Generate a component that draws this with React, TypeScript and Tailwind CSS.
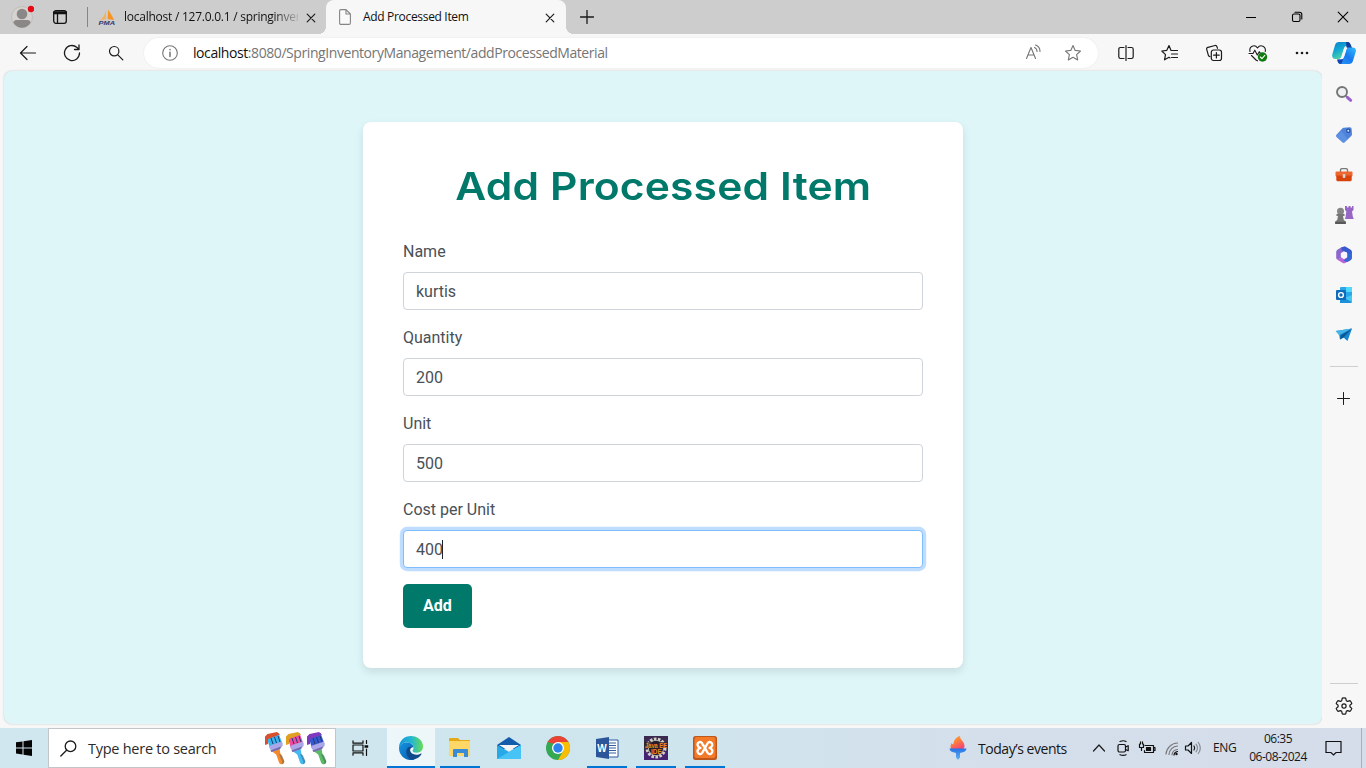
import React from "react";

type SvgProps = { w?: number; h?: number; box?: string; className?: string; sw?: number; stroke?: string; children: React.ReactNode };

function Glyph({ w = 20, h = 20, box, className = "", sw = 1.2, stroke = "#1b1b1b", children }: SvgProps) {
  return (
    <svg width={w} height={h} viewBox={box ?? `0 0 ${w} ${h}`} fill="none" stroke={stroke} strokeWidth={sw} strokeLinecap="round" strokeLinejoin="round" className={`block shrink-0 ${className}`}>
      {children}
    </svg>
  );
}

function CloseGlyph() {
  return <Glyph w={10} h={10} sw={1.2}><path d="M1.200 1.200l7.600 7.600M8.800 1.200L1.200 8.800" /></Glyph>;
}

function TabBar() {
  return (
    <div className="flex h-[34px] bg-[#cdcdcd]">
      <div className="flex w-11 items-center justify-center">
        <Glyph w={24} h={24} stroke="none">
          <circle cx="12" cy="12" r="10.5" fill="#d6d2cf" stroke="#c2beba" strokeWidth="1" />
          <circle cx="12" cy="9" r="5.3" fill="#8a8886" />
          <path d="M3.5 18c0-2.2 1.2-3 3-3h11c1.800 0 3 .8 3 3-2 3.200-5 4.800-8.500 4.800S5.500 21.200 3.500 18z" fill="#8a8886" />
          <circle cx="21" cy="4" r="3.2" fill="#e60b17" />
        </Glyph>
      </div>
      <div className="flex w-8 items-center justify-center">
        <Glyph w={16} h={16} stroke="#111" sw={1.3}>
          <rect x="1.700" y="1.700" width="12.600" height="12.600" rx="2.200" />
          <path d="M2 3.200h12M2 4.300h12" strokeWidth="2" />
          <path d="M5.500 5v9" />
        </Glyph>
      </div>
      <div className="flex w-3 items-center justify-end"><div className="h-5 w-px bg-[#858585]" /></div>
      <div className="flex w-[238px] items-center rounded-br-[8px] pl-2.5">
        <div className="w-[18px] shrink-0">
          <svg width="18" height="17" viewBox="0 0 18 17">
            <path d="M8 0.500C7.500 5 5 9 1.500 11.500L8 10z" fill="#f4b25d" />
            <path d="M10 0.500c2 3 4.500 7 6 10.500L9.500 10c.5-3 .7-6 .5-9.500z" fill="#f7931e" />
            <text x="0.500" y="15.500" textLength="16.500" lengthAdjust="spacingAndGlyphs" className="font-['Liberation_Sans']" fontSize="6" fontWeight="700" fontStyle="italic" fill="#34376e">PMA</text>
          </svg>
        </div>
        <div className="ml-2 w-[174px] shrink-0 overflow-hidden bg-[linear-gradient(90deg,#111_86%,transparent_102%)] bg-clip-text text-[12px] tracking-[-0.250px] whitespace-nowrap text-transparent">localhost / 127.0.0.1 / springinventory</div>
        <div className="ml-2 pt-px"><CloseGlyph /></div>
      </div>
      <div className="relative flex w-[240px] items-center rounded-t-[8px] bg-[#f7f7f7] pl-[13px]">
        <div className="absolute bottom-0 -left-2 size-2 bg-[radial-gradient(circle_at_0_0,transparent_8px,#f7f7f7_8px)]" />
        <div className="absolute -right-2 bottom-0 size-2 bg-[radial-gradient(circle_at_100%_0,transparent_8px,#f7f7f7_8px)]" />
        <Glyph w={12} h={16} stroke="#858585" sw={1.100}>
          <path d="M2 .6h5l4.400 4.400v9q0 1.400-1.400 1.400H2Q.6 15.400.6 14V2Q.6.6 2 .6zM7 .8V5h4.200" fill="#fafafa" />
        </Glyph>
        <div className="ml-3 w-[182px] text-[12px] tracking-[-0.320px] whitespace-nowrap text-[#111]">Add Processed Item</div>
        <div className="pt-px"><CloseGlyph /></div>
      </div>
      <div className="flex w-[42px] items-center justify-center"><Glyph w={14} h={14} sw={1.300}><path d="M7 .5v13M.5 7h13" /></Glyph></div>
      <div className="ml-auto flex">
        <div className="flex w-[46px] items-center justify-center"><div className="h-px w-2.5 bg-black" /></div>
        <div className="flex w-[46px] items-center justify-center">
          <Glyph w={12} h={12} sw={1.100} stroke="#000"><rect x="1.500" y="3" width="7.500" height="7.500" rx="1.500" /><path d="M4 1.200h4.500q2.300 0 2.300 2.300V8" /></Glyph>
        </div>
        <div className="flex w-[46px] items-center justify-center"><Glyph w={12} h={12} sw={1.100} stroke="#000"><path d="M1.200 1.200l9.600 9.600M10.800 1.200L1.200 10.800" /></Glyph></div>
      </div>
    </div>
  );
}

const starPath = "M9 1.500l2.200 4.900 5.300.6-3.900 3.600 1.100 5.300L9 13.200l-4.700 2.700 1.100-5.300L1.500 7l5.300-.6z";

function Toolbar() {
  const slot = "flex w-11 items-center justify-center";
  return (
    <div className="flex h-[37px] items-center bg-[#f7f7f7] pl-1.5">
      <div className={slot}><Glyph w={18} h={18}><path d="M16.500 9H1.500M8 2.500L1.500 9l6.500 6.500" /></Glyph></div>
      <div className={slot}><Glyph w={18} h={18} sw={1.300}><path d="M16.500 9A7.500 7.500 0 1 1 13.700 3.200L16 5.200M16 1v4.500h-4.500" /></Glyph></div>
      <div className={slot}><Glyph w={16} h={16} sw={1.200}><circle cx="6.200" cy="6.200" r="4.700" /><path d="M9.800 9.800l5 5" /></Glyph></div>
      <div className="ml-1.5 flex h-[30px] w-[954px] items-center rounded-full bg-white pr-4 pl-[18px] shadow-[0_0_2px_rgba(0,0,0,0.08)]">
        <Glyph w={16} h={16} stroke="#767676" sw={1.100}><circle cx="8" cy="8" r="7.300" /><path d="M8 7.200v4.300M8 4.500v.3" strokeWidth="1.500" /></Glyph>
        <div className="ml-[15px] text-[14px] tracking-[-0.425px] whitespace-nowrap text-[#757575]"><span className="text-[#111]">localhost</span>:8080/SpringInventoryManagement/addProcessedMaterial</div>
        <div className="ml-auto flex items-center gap-[22px]">
          <Glyph w={17} h={17} stroke="#757575" sw={1.100}><path d="M1.500 14.500L6 3.500l4.500 11M3 11h6M9.500 3.500q2.500 1 2.500 4M10.500 1q4.500 1.500 4.500 6.500" /></Glyph>
          <Glyph w={18} h={18} stroke="#757575" sw={1.100}><path d={starPath} /></Glyph>
        </div>
      </div>
      <div className="ml-1.5 flex">
        <div className={slot}><Glyph w={16} h={18}><path d="M6 3.500H2.500q-1.700 0-1.700 1.700v7.600q0 1.700 1.700 1.700H6M10 3.500h3.500q1.700 0 1.700 1.700v7.600q0 1.700-1.700 1.700H10M8 1.500v15" /></Glyph></div>
        <div className={slot}><Glyph w={18} h={18}><path d="M10 6.500L8 1.500 5.800 6.300.8 7l3.700 3.600-1 5.200 4.500-2.500 1 .6M10.500 6.500h6M10.500 10h6M10.500 13.500h6" /></Glyph></div>
        <div className={slot}><Glyph w={18} h={18}><path d="M12.500 4.300l-.6-1.700Q11.500 1.200 10 1.500L3 3.300Q1.300 3.700 1.700 5.300l1.700 6q.4 1.300 1.600 1.300" /><rect x="6.300" y="6" width="10.200" height="10.500" rx="2.200" /><path d="M11.400 8.500v5.500M8.600 11.200h5.600" /></Glyph></div>
        <div className={slot}>
          <Glyph w={20} h={18} sw={1.100}>
            <path d="M2 7.500C.8 2.500 6.500-.3 9.500 4c3-4.300 8.700-1.500 7.800 3.500M3.500 11.500l4.500 4.500 1.500 0.800M1 9.500h4l1.800-3.300L9.300 11l2-3.300 1.300 1.800h2" />
            <circle cx="14.500" cy="13" r="4.700" fill="#107c10" stroke="none" /><path d="M12.300 13l1.600 1.600 2.900-3.200" stroke="#fff" />
          </Glyph>
        </div>
        <div className={slot}><Glyph w={14} h={4} stroke="none"><g fill="#1b1b1b"><circle cx="2" cy="2" r="1.300" /><circle cx="7" cy="2" r="1.300" /><circle cx="12" cy="2" r="1.300" /></g></Glyph></div>
      </div>
      <div className="flex w-10 items-center justify-center"><CopilotLogo /></div>
    </div>
  );
}

function CopilotLogo() {
  return (
    <svg width="24" height="24" viewBox="0 0 24 24">
      <defs>
        <linearGradient id="cpA" x1="0" y1="0" x2="0.500" y2="1"><stop stopColor="#087fc4" /><stop offset=".5" stopColor="#13a8d5" /><stop offset="1" stopColor="#58d99a" /></linearGradient>
        <linearGradient id="cpB" x1="0" y1="1" x2="1" y2="0"><stop stopColor="#2a9df4" /><stop offset=".5" stopColor="#1779f0" /><stop offset="1" stopColor="#31bfff" /></linearGradient>
      </defs>
      <path d="M7 1h8.500c2 0 2.500 1.500 3.200 4h-4c-2 0-2.500 1.500-3 3.200L9.600 15c-.6 2-1.400 3-3.600 3H3.500C.8 18-.4 16 .4 13L3 4.200C3.700 2 5 1 7 1z" fill="url(#cpA)" />
      <path d="M14 1h2c2.300 0 3 4 4.500 6.500l-6-.5z" fill="#123e9c" />
      <path d="M17 23H8.500c-2 0-2.700-1.500-3.300-4.500H9c2 0 2.600-1.300 3.200-3.200l2-6.300c.6-2 1.500-2.500 3.500-2.500h2.800c2.700 0 4 1.500 3.200 4.500L21 19.800c-.7 2.200-2 3.200-4 3.200z" fill="url(#cpB)" />
      <path d="M11.700 8.500c.4-1.300 1-2 2.300-2h2c-1 .3-1.500 1.200-1.800 2.500l-2 6.300c-.5 1.600-1 2.500-2.400 2.700H8c1-.4 1.400-1.500 1.700-2.700z" fill="#f7f7f7" />
      <path d="M5.200 18.500h4c2 0 2.500-1 3-3l-2.300 6.300c-.4 1.200-1.800 1.600-2.800.7-1-.8-1.600-2.500-1.900-4z" fill="#1945b4" />
    </svg>
  );
}

function FormField({ label, value, focused }: { label: string; value: string; focused?: boolean }) {
  return (
    <div className="mb-4">
      <label className="mb-2 block h-6 leading-6">{label}</label>
      <div className={`flex h-[38px] items-center rounded-[4px] border bg-white px-3 leading-6 ${focused ? "border-[#80bdff] shadow-[0_0_0_3.200px_rgba(0,123,255,0.25)]" : "border-[#ced4da]"}`}>
        <span className="pt-[2px]">{value}</span>
        {focused && <span className="-ml-px h-[19px] w-px bg-[#20242a]" />}
      </div>
    </div>
  );
}

function PageContent() {
  return (
    <main className="ml-1 flex h-[653px] w-[1318px] justify-center rounded-[8px] bg-[#def6f8] pt-[51px] shadow-[0_0_2px_rgba(0,0,0,0.22)]">
      <section className="h-[546px] w-[600px] rounded-[8px] bg-white p-10 font-['Roboto',sans-serif] text-[16px] text-[#495057] shadow-[0_4px_8px_rgba(0,0,0,0.1)]">
        <h1 className="mb-[30px] flex h-12 items-center justify-center font-['Inter',sans-serif] text-[38.500px] leading-[48px] font-semibold whitespace-nowrap text-[#00796b]"><span className="block scale-x-[1.105] tracking-[0.150px]">Add Processed Item</span></h1>
        <FormField label="Name" value="kurtis" />
        <FormField label="Quantity" value="200" />
        <FormField label="Unit" value="500" />
        <FormField label="Cost per Unit" value="400" focused />
        <button className="flex h-11 w-[69px] items-center justify-center rounded-[5px] bg-[#00796b] font-bold text-white">Add</button>
      </section>
    </main>
  );
}

function Sidebar() {
  const slot = "flex h-10 items-center justify-center";
  return (
    <aside className="flex h-[657px] w-[43px] flex-col bg-[#f7f7f7] pt-[3px]">
      <div className={slot}>
        <Glyph w={18} h={18}><circle cx="7" cy="7" r="5" stroke="#757575" strokeWidth="1.900" fill="#eef1f4" /><path d="M11 11l1 1" stroke="#777" strokeWidth="2" /><path d="M12.500 12.500l3.200 2.800" stroke="#9b62cf" strokeWidth="3" /></Glyph>
      </div>
      <div className={`${slot} pt-px`}>
        <Glyph w={18} h={18} stroke="none"><path d="M8.500 1.800l6.500-.6q1.500 0 1.600 1.500l.4 5.500q0 1-.8 1.800l-6.500 6.300q-1.200 1-2.300 0L1.500 11q-1-1.200 0-2.200l5.800-6.300q.5-.6 1.200-.7z" fill="#4f83db" /><path d="M1.300 10.500l6.200 5.600q1 .7 2 0l3-3-6-8-5 5z" fill="#659be9" opacity=".6" /><circle cx="13.300" cy="4.700" r="1.600" fill="#d8e8ff" stroke="#244f9e" /></Glyph>
      </div>
      <div className={`${slot} pt-[2px]`}>
        <Glyph w={18} h={16} stroke="none"><path d="M5.500 5V3q0-1.400 1.400-1.400H11q1.500 0 1.500 1.400v2" stroke="#777" strokeWidth="1.400" /><rect x=".5" y="4.500" width="17" height="5" rx="1" fill="#ef6730" /><path d="M1.300 8.500h15.400v4.300q0 1.500-1.500 1.500H2.800q-1.500 0-1.500-1.500z" fill="#d8430c" /><rect x="7.700" y="7" width="2.700" height="4" rx="1" fill="#d6d5d4" /></Glyph>
      </div>
      <div className={`${slot} pt-[2px]`}>
        <Glyph w={20} h={20} stroke="none"><path d="M11 1h2v1.500h1.500V1h2v1.500H18V1h1.500v4L18 6.500l.8 5 1 2.500h-9l.7-1.500.8-6L11 5z" fill="#9767c7" /><circle cx="6.500" cy="6.300" r="3.500" fill="#858585" /><path d="M2.500 9h8v2H9l.8 4 2 1.500V19H1.200v-2.500l2-1.500L4 11H2.500z" fill="#777" /><path d="M1.200 16.800h10.600V19H1.200z" fill="#595959" /></Glyph>
      </div>
      <div className={`${slot} pt-[2px]`}>
        <Glyph w={18} h={18} stroke="none"><path d="M6.500 1.300L10 .5l5.500 3.200q1.300.8 1.300 2.300v2.500L11.500 6 9 5.500 6.500 7v5L2 13.500 1.200 12V6q0-1.500 1.200-2.200z" fill="#8a66cf" /><path d="M10 .5l5.500 3.200q1.300.8 1.300 2.300v6q0 1.500-1.300 2.300L12 16V6.500L6.500 4V1.300z" fill="#345bd0" /><path d="M2 13.500l4.500-1.700L9 13l6.500-3.500 1.300 2.200q0 1.500-1.300 2.300l-5.300 3q-1.200.7-2.400 0z" fill="#ba63d8" /><path d="M12 6.500l4.800 2.300V12l-1 1.800L12 16l-3.500-1.500L12 12z" fill="#3269d4" /><path d="M9 5.500l3.200 1.800v3.600L9 12.800l-3.200-1.900V7.300z" fill="#f8f5ff" /></Glyph>
      </div>
      <div className={`${slot} pt-[2px]`}>
        <svg width="18" height="18" viewBox="0 0 18 18"><rect x="5" y="1" width="12" height="12" rx="1" fill="#28a8e8" /><path d="M11 1h5q1 0 1 1v4h-6z" fill="#50d9ff" /><path d="M5 9l6 3 6-3v6.500q0 1.500-1.500 1.500H5z" fill="#1b91db" /><path d="M17 9v7L9 12z" fill="#45c6f4" /><rect x="1" y="4" width="10" height="10" rx="1" fill="#0f6cbd" /><circle cx="6" cy="9" r="2.400" stroke="#fff" strokeWidth="1.400" fill="none" /></svg>
      </div>
      <div className={`${slot} pt-[2px]`}>
        <svg width="18" height="18" viewBox="0 0 18 18"><path d="M.7 5L17 2.500 12.500 15 8.500 11.500 5 13.500 4.200 9z" fill="#1687cf" /><path d="M.7 5L17 2.500 4.200 9z" fill="#48b5e8" /><path d="M17 2.500L5.800 9.500 5 13.500l3.500-2z" fill="#0b5794" /></svg>
      </div>
      <div className="mr-[7px] ml-2 mt-3 h-px w-7 shrink-0 bg-[#cecece]" />
      <div className="mt-[25px] flex justify-center pr-px"><Glyph w={13} h={13} sw={1}><path d="M6.500 .5v12M.5 6.500h12" /></Glyph></div>
      <div className="mr-[7px] ml-2 mt-auto h-px w-7 shrink-0 bg-[#cecece]" />
      <div className="mt-[13px] mb-[13px] flex justify-center">
        <Glyph w={18} h={18}><circle cx="9" cy="9" r="2.100" /><path d="M7.300 1.200q1.700-.5 3.400 0l.6 2.500 1.200.7 2.500-.8q1.300 1.200 1.800 3l-1.900 1.700v1.400l1.900 1.700q-.5 1.800-1.800 3l-2.500-.8-1.200.7-.6 2.500q-1.700.5-3.400 0l-.6-2.500-1.200-.7-2.500.8q-1.300-1.200-1.800-3l1.900-1.700V8.300L1.200 6.600q.5-1.800 1.800-3l2.500.8 1.200-.7z" /></Glyph>
      </div>
    </aside>
  );
}

function Brush({ paint, bristle, handle }: { paint: string; bristle: string; handle: string }) {
  return (
    <svg width="21" height="34" viewBox="0 0 21 34">
      <path d="M7.500 20l8-3 .7 5 4 8q.5 2-1.500 3t-3.500-1l-3-8.500z" fill={handle} />
      <path d="M18 24l2.200 6q.5 2-1.500 3l-1 .2q1-1 .6-2.500L15 23z" fill="#35405c" opacity=".35" />
      <path d="M3 7L14.500 2l4 11L6 18z" fill={bristle} />
      <path d="M1 14V5.500L3.500 3 13 1l3 2.500L4 8v5z" fill={paint} />
      <path d="M7 7l2 6M10.500 6l2 6M14 5l2 6" stroke="#213a78" />
      <path d="M5 15l13-4.500.8 4L16 18l-8.500 3z" fill="#aaa6e7" />
      <path d="M6.500 19.500l10.500-4-1 2.500-8.500 3z" fill="#7369ae" />
    </svg>
  );
}

function EdgeLogo() {
  return (
    <svg width="26" height="26" viewBox="0 0 26 26">
      <defs>
        <linearGradient id="edA" x1="0" x2="1"><stop stopColor="#1597d8" /><stop offset=".5" stopColor="#22b6d3" /><stop offset="1" stopColor="#67dc55" /></linearGradient>
        <linearGradient id="edB" x1="0" y1="0" x2="1" y2="1"><stop stopColor="#1695e0" /><stop offset="1" stopColor="#0759aa" /></linearGradient>
      </defs>
      <path d="M1 13C1 5.500 6.500 1 13 1s12 4.500 12 10.500c0 4-2.800 6.200-6.200 6.200-3 0-4.200-1-4.200-2 0-.8 1-1.300 1-3C15.600 9 12 7.500 8.500 7.500 4.500 7.500 2 10 1 13z" fill="url(#edA)" />
      <path d="M1 12.500C2 9.500 4.500 7.500 8.500 7.500c4 0 7.100 2 7.100 5.200-1-1-5.800-.5-5.800 4.500 0 3.500 3 6.500 7.200 7.200A12 12 0 0 1 1 12.500z" fill="url(#edB)" />
      <path d="M8.500 15c.7-3 3.500-4 6-3-2.500 1-3 3-1.800 5 1.600 2.600 6.600 4 10.300 1.500.5-.3.8.1.5.6-2 3.500-6 5.900-10 5.400C10 23.500 7.700 19 8.500 15z" fill="#114a8b" />
    </svg>
  );
}

function AppIcon({ name }: { name: string }) {
  if (name === "edge") return <EdgeLogo />;
  if (name === "files") return <svg width="24" height="22" viewBox="0 0 24 22"><path d="M1 2q0-1 1-1h8l2 2h10v5H1z" fill="#e6a817" /><rect x="1" y="4" width="21" height="15" fill="#ffd767" /><path d="M5 20v-7q0-1 1-1h13q1 0 1 1v7h-4v-4H9v4z" fill="#388bd5" /></svg>;
  if (name === "mail") return <svg width="26" height="26" viewBox="0 0 26 26"><path d="M1 10L13 2l12 8v4H1z" fill="#125bab" /><path d="M1 10l12 7 12-7v14H1z" fill="#27a9e8" /><path d="M25 10v14H1z" fill="#48c3f6" /><path d="M3 10h20l-10 6.300z" fill="#f3f3f4" /></svg>;
  if (name === "chrome") return <svg width="26" height="26" viewBox="0 0 26 26"><circle cx="13" cy="13" r="12" fill="#34a853" /><path d="M13 13L2.600 7A12 12 0 0 1 23.400 7z" fill="#ea4335" /><path d="M13 7h10.400A12 12 0 0 1 13 25l5.200-9z" fill="#fbbc04" /><path d="M2.600 7l5.200 9L13 10z" fill="#34a853" /><circle cx="13" cy="13" r="6" fill="#fff" /><circle cx="13" cy="13" r="4.700" fill="#2c83ee" /></svg>;
  if (name === "word") return <svg width="26" height="24" viewBox="0 0 26 24"><path d="M13 4h11v17H13z" fill="#fff" stroke="#2c5aa0" /><path d="M15 7h7M15 9.500h7M15 12h7M15 14.500h7M15 17h7" stroke="#335f9d" /><path d="M2 3l13-2v22L2 21z" fill="#2b579a" /><text x="3.300" y="16" fill="#fff" className="font-['Liberation_Sans']" fontSize="10" fontWeight="700">W</text></svg>;
  if (name === "eclipse") return (
    <svg width="24" height="24" viewBox="0 0 24 24" className="overflow-visible"><rect width="24" height="24" fill="#3b294f" /><rect y="15" width="24" height="9" fill="#462273" /><circle cx="12" cy="12" r="9" fill="#241d2b" stroke="#d2d0c9" strokeWidth="3" strokeDasharray="2.600 1.400" /><circle cx="12" cy="12" r="7.700" fill="none" stroke="#b6b4ae" />
      <rect y="6" width="24" height="6" fill="#2d2029" opacity=".7" /><text x="1" y="11.500" textLength="22" lengthAdjust="spacingAndGlyphs" fontSize="6.500" fontWeight="700" fill="#ef8a20" className="font-['Liberation_Sans']">Java EE</text><text x="7" y="18" textLength="11" lengthAdjust="spacingAndGlyphs" fontSize="6.500" fontWeight="700" fill="#ef8a20" className="font-['Liberation_Sans']">IDE</text></svg>
  );
  return (
    <svg width="24" height="24" viewBox="0 0 24 24"><rect width="24" height="24" rx="2.500" fill="#bd571c" /><rect x="1.500" y="1" width="21" height="21" rx="2" fill="#f37a28" />
      <path d="M10.200 9.800L9 7Q7.800 5.400 6 6.300q-1.800 1-1.400 3Q5 11.200 7.500 12 4.800 12.800 4.500 15q-.2 2 1.600 2.900 1.900.8 3.100-1L14.800 7q1.200-1.600 3-.7 1.800 1 1.500 3-.4 1.900-2.800 2.700 2.600.8 2.900 3 .2 2-1.600 2.900-1.900.8-3.100-1L10 8.500" fill="none" stroke="#fff" strokeWidth="2.300" strokeLinejoin="round" /></svg>
  );
}

const apps = [
  { name: "edge", open: true },
  { name: "files", open: true },
  { name: "mail", open: false },
  { name: "chrome", open: false },
  { name: "word", open: true },
  { name: "eclipse", open: true },
  { name: "xampp", open: true },
];

function Taskbar() {
  const slot = "flex w-6 items-center justify-center";
  return (
    <footer className="flex h-10 bg-[linear-gradient(90deg,#d0e7ef_0%,#cfe5ee_50%,#d4dfeb_72%,#d5dcea_100%)] text-[#161616]">
      <div className="flex w-12 items-center justify-center">
        <svg width="16" height="16" viewBox="0 0 16 16"><path d="M0 2.300l6.500-.9v6H0zM7.500 1.200L16 0v7.400H7.500zM0 8.500h6.500v6L0 13.600zM7.500 8.500H16V16l-8.500-1.200z" fill="#050505" /></svg>
      </div>
      <div className="flex w-[288px] items-center border border-[#c3c6c8] bg-white pl-[11px]">
        <Glyph w={17} h={17} sw={1.300}><circle cx="10.500" cy="6.300" r="5.300" /><path d="M6.600 10.200L.8 16" /></Glyph>
        <div className="ml-[11px] w-[176px] pt-0.5 text-[14.500px] tracking-[-0.260px] whitespace-nowrap text-[#2b2b2b]">Type here to search</div>
        <div className="flex">
          <Brush paint="#d9502f" bristle="#39b3eb" handle="#f48a2c" />
          <Brush paint="#dfa024" bristle="#ed4aa0" handle="#43baf0" />
          <Brush paint="#8238bd" bristle="#3558cf" handle="#5abb62" />
        </div>
      </div>
      <div className="flex w-[51px] items-center pl-4">
        <Glyph w={17} h={16} stroke="#111" sw={1.200}><path d="M1 .8v2.400h10V.8M1 15.200v-2.400h10v2.400M1 5h10v6H1zM14.500.5v3M14.500 9v6.500" /><path d="M13 5.500h3v2h-3z" fill="#111" strokeWidth=".5" /></Glyph>
      </div>
      <div className="flex gap-px">
        {apps.map((app, i) => (
          <div key={app.name} className={`flex w-12 flex-col items-center ${i === 0 ? "bg-[#edf6f9]" : ""}`}>
            <div className="flex h-[38px] items-center pt-0.5"><AppIcon name={app.name} /></div>
            {app.open && <div className={`h-0.5 bg-[#0075d3] ${i === 0 ? "w-12" : "w-10"}`} />}
          </div>
        ))}
      </div>
      <div className="ml-auto flex w-[419px] items-center">
        <svg width="22" height="26" viewBox="0 0 22 26" className="block">
          <defs><linearGradient id="flame" x1="0" y1="0" x2=".5" y2="1"><stop stopColor="#ffae35" /><stop offset=".5" stopColor="#ff7f38" /><stop offset="1" stopColor="#f34b74" /></linearGradient><linearGradient id="torch" x1="0" x2="0" y1="0" y2="1"><stop stopColor="#2572e8" /><stop offset="1" stopColor="#67b6ef" /></linearGradient></defs>
          <path d="M4 14C3 11 4 9.500 4.500 8c.5 1 1 1.200 1.800 1.300C7 5 8.500 2.500 13 1c-.3 3.500 4.500 5.500 4.500 10q0 2-1 3z" fill="url(#flame)" />
          <path d="M2.500 13.500h17q0 3.500-6.500 4.500v4.500L11 25l-2-2.500V18Q2.500 17 2.500 13.500z" fill="url(#torch)" />
        </svg>
        <div className="ml-[9px] w-[109px] text-[14px] tracking-[-0.450px] whitespace-nowrap">Today’s events</div>
        <div className="flex gap-0">
          <div className={slot}><Glyph w={14} h={10}><path d="M1.500 8L7 2l5.500 6" /></Glyph></div>
          <div className={slot}><Glyph w={14} h={18} stroke="#111"><rect x="2" y="5.500" width="7.500" height="7.500" rx="1.500" /><path d="M9.500 8l2.700-1.300v5L9.500 10.500M4 2.500q3.500-1.500 6 0M4 15.700q3.500 1.300 6 0" /></Glyph></div>
          <div className={slot}><Glyph w={18} h={15} stroke="#111"><path d="M7 4.500h8.500v7h-9V9.500M16 6.500h1v3h-1M1.500 3v3.500h4V3M2.500.8V3M4.500.8V3M3.500 6.500V9.500" /><path d="M8.500 6.500h4v3h-4z" fill="#111" /></Glyph></div>
          <div className={slot}><Glyph w={15} h={15} stroke="#777"><path d="M2 13A12 12 0 0 1 13.500 2M5 13.500a9 9 0 0 1 8.500-8.500M8 13.700A6 6 0 0 1 13.500 8.500" /><path d="M10 14a4 4 0 0 1 3.500-3.500" stroke="#111" /><circle cx="12.500" cy="13" r="1.200" fill="#111" stroke="none" /></Glyph></div>
          <div className={slot}><Glyph w={18} h={14} stroke="#111" className="-ml-1"><path d="M1.500 5H4l3.500-3.500v11L4 9H1.500z" /><path d="M10 5q1.300 2 0 4" /><path d="M12 3.200q3 3.800 0 7.600M14.300 1.500q4 5.500 0 11" stroke="#858c96" /></Glyph></div>
        </div>
        <div className="ml-[6px] w-7 text-[12px] tracking-[-0.350px]">ENG</div>
        <div className="ml-1 w-[66px] text-center text-[12px] leading-[18px] tracking-[-0.500px] whitespace-nowrap"><div>06:35</div><div>06-08-2024</div></div>
        <div className="ml-[14px] flex w-[17px] justify-center"><Glyph w={17} h={17} stroke="#111" sw={1.200}><path d="M1 1.500h15v11h-5L8.500 15 6 12.500H1z" strokeLinejoin="miter" /></Glyph></div>
        <div className="ml-[19px] h-10 w-px bg-[#a6afba]" />
      </div>
    </footer>
  );
}

export default function App() {
  return (
    <div className="flex h-[768px] w-[1366px] flex-col overflow-hidden bg-[#f7f7f7] font-['Open_Sans','Noto_Sans',sans-serif]">
      <TabBar />
      <Toolbar />
      <div className="flex h-[657px]">
        <PageContent />
        <Sidebar />
      </div>
      <Taskbar />
    </div>
  );
}
